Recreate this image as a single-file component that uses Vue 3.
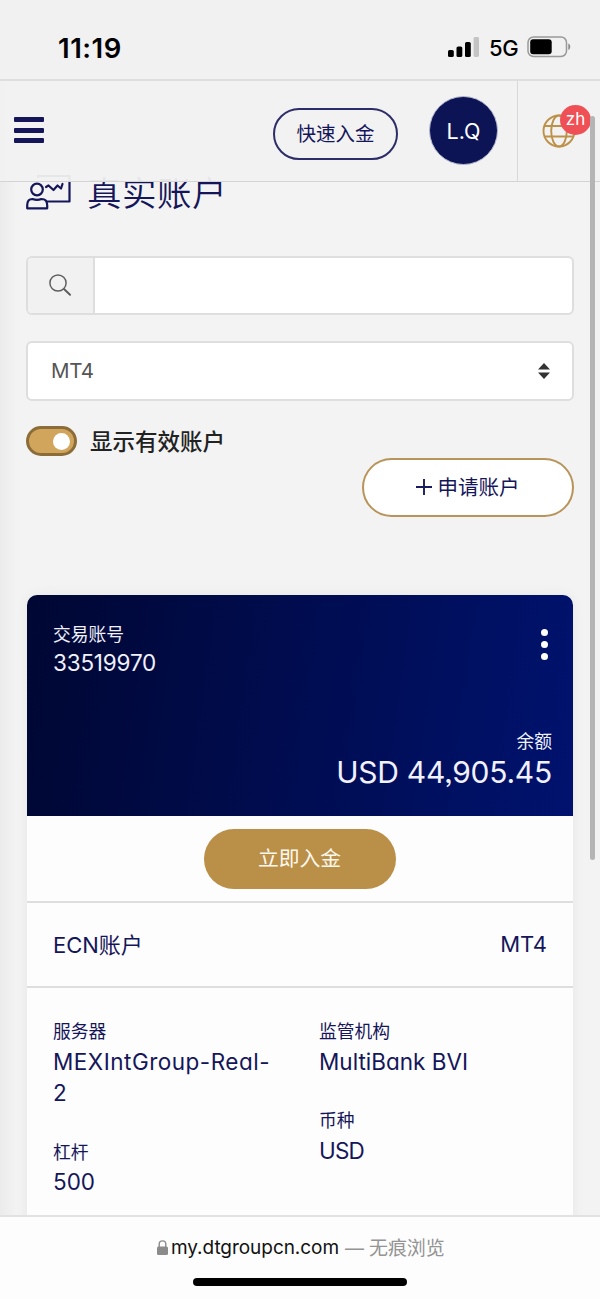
<script setup>
const signal = [
  { x: 0, y: 13, h: 7 },
  { x: 8.5, y: 9.5, h: 10.5 },
  { x: 17, y: 5, h: 15 }
]
const columns = [
  [
    { label: '服务器', value: 'MEXIntGroup-Real-\u200b2', cls: 'server' },
    { label: '杠杆', value: '500', cls: 'num' }
  ],
  [
    { label: '监管机构', value: 'MultiBank BVI', cls: 'bank' },
    { label: '币种', value: 'USD', cls: 'cur' }
  ]
]
</script>

<template>
  <div class="screen">
    <div class="status">
      <span class="time">11:19</span>
      <div class="status-right">
        <svg class="signal" width="32" height="20" viewBox="0 0 32 20">
          <rect v-for="b in signal" :key="b.x" :x="b.x" :y="b.y" width="5.8" :height="b.h" rx="1.6" />
          <rect x="25.6" y="0" width="5.4" height="20" rx="1.4" fill="#c4c4c4" />
        </svg>
        <span class="net">5G</span>
        <svg width="44" height="22" viewBox="0 0 44 22">
          <rect x="1" y="1" width="38.5" height="19.5" rx="5.5" fill="none" stroke="#999" stroke-width="1.5" />
          <rect x="3.2" y="3.2" width="21.5" height="15" rx="3" />
          <path d="M41.3 7.5c2.6 1 2.6 5.500 0 6.500z" fill="#888" />
        </svg>
      </div>
    </div>

    <header class="header">
      <div class="burger"><i></i><i></i><i></i></div>
      <button class="quick"><span>快速入金</span></button>
      <div class="avatar"><span>L.Q</span></div>
      <div class="lang">
        <svg width="34" height="34" viewBox="0 0 34 34" fill="none" stroke="#bd9148" stroke-width="1.9">
          <circle cx="17" cy="17" r="15.500" />
          <ellipse cx="17" cy="17" rx="7.800" ry="15.500" />
          <path d="M3 12h28M3 22.500h28" />
        </svg>
        <span class="badge">zh</span>
      </div>
    </header>

    <main class="main">
      <h1 class="title">
        <svg width="46" height="36" viewBox="0 0 46 36" fill="none" stroke="#15165a" stroke-width="2.200" stroke-linejoin="round" stroke-linecap="round">
          <path d="M12 3V2H43.500V27.500H21" />
          <circle cx="11" cy="15.500" r="5.800" />
          <path d="M1.200 34.300V31.300C1.200 27 3.500 25 6.500 25C9.500 26.200 12.500 26.200 15.500 25C19 25 21.200 27 21.200 31.300V34.300Z" />
          <path d="M20 13L22.500 11.500L27.500 16L31.500 11.500L35 14.500L36.500 10" />
        </svg>
        <span>真实账户</span>
      </h1>

      <div class="search">
        <div class="search-icon">
          <svg width="22" height="22" viewBox="0 0 22 22" fill="none" stroke="#5f5f5f" stroke-width="1.500" stroke-linecap="round">
            <circle cx="9" cy="9" r="8.100" />
            <path d="M15 15L21 20.800" stroke-width="2" />
          </svg>
        </div>
        <div class="search-input"></div>
      </div>

      <div class="select">
        <span>MT4</span>
        <svg width="12" height="16" viewBox="0 0 12 16" fill="#333"><path d="M0 6.600L6 0L12 6.600ZM0 9.400L6 16L12 9.400Z" /></svg>
      </div>

      <div class="toggle-row">
        <div class="toggle"><i></i></div>
        <span>显示有效账户</span>
      </div>

      <button class="apply">
        <svg width="16" height="16" viewBox="0 0 16 16" stroke="#1a1b5e" stroke-width="1.900"><path d="M0 8H16M8 0V16" /></svg>
        <span>申请账户</span>
      </button>

      <section class="card">
        <div class="hero">
          <div class="hero-top">
            <div>
              <div class="label">交易账号</div>
              <div class="account">33519970</div>
            </div>
            <div class="dots"><i></i><i></i><i></i></div>
          </div>
          <div class="balance">
            <div class="label">余额</div>
            <div class="amount">USD 44,905.45</div>
          </div>
        </div>
        <div class="fund"><button>立即入金</button></div>
        <div class="type">
          <span>ECN账户</span>
          <span class="mt">MT4</span>
        </div>
        <div class="details">
          <div v-for="(col, i) in columns" :key="i" class="col">
            <div v-for="d in col" :key="d.label" class="field">
              <div class="label">{{ d.label }}</div>
              <div class="value" :class="d.cls">{{ d.value }}</div>
            </div>
          </div>
        </div>
      </section>
    </main>

    <footer class="footer">
      <div class="url">
        <svg width="11" height="15" viewBox="0 0 11 15"><path d="M2.200 7V4C2.200 -0.200 8.800 -0.200 8.800 4V7" fill="none" stroke="#8b8b8b" stroke-width="1.400" /><rect y="6.400" width="11" height="8.600" rx="1.500" fill="#8b8b8b" /></svg>
        <span class="domain">my.dtgroupcn.com</span>
        <span class="private">— 无痕浏览</span>
      </div>
      <div class="home"></div>
    </footer>
    <div class="scrollbar"></div>
  </div>
</template>

<style>
body { background: #f2f2f2; }
</style>

<style scoped>
* { box-sizing: border-box; }
.screen {
  position: relative; width: 600px; height: 1299px; overflow: hidden;
  display: flex; flex-direction: column;
  background: linear-gradient(90deg, #ebebeb 0, #f3f3f3 16px, #f3f3f3 100%);
  color: #15165a;
  font-family: Inter, "Noto Sans CJK SC", sans-serif;
  font-feature-settings: "cv11", "ss03";
}
button { font: inherit; color: inherit; padding: 0; margin: 0; }
.status {
  flex: none; height: 81px; background: #f1f1f1; border-bottom: 2px solid #dedede;
  display: flex; justify-content: space-between; padding: 36px 29px 0 58px; color: #000;
}
.time { font-size: 27.500px; line-height: 24px; font-weight: 600; letter-spacing: 0.5px; }
.status-right { display: flex; height: 22px; align-items: center; }
.signal { margin-right: 9px; }
.net { font-size: 22px; line-height: 24px; font-weight: 500; width: 30px; margin-right: 8px; padding-top: 2px; letter-spacing: -0.3px; }
.header {
  flex: none; position: relative; z-index: 1; height: 101px; display: flex; align-items: center;
  background: rgba(241, 241, 241, 0.95); border-bottom: 1px solid #d4d4d4; padding-left: 14px;
}
.burger { width: 30px; display: grid; gap: 5.500px; margin: -2px 229px 0 0; }
.burger i { height: 5px; border-radius: 1px; background: #15165a; }
.quick {
  width: 125px; height: 52px; border: 2px solid #2d2d68; border-radius: 26px; background: none;
  font-size: 19.500px; line-height: 48px; margin: 6px 32px 0 0;
}
.avatar {
  width: 69px; height: 69px; border-radius: 50%; background: #0c1455; border: 1px solid #b8bbd0;
  color: #fff; font-size: 21.500px; line-height: 68px; text-align: center; margin: -1px 0 0 -1px;
}
.lang {
  position: relative; align-self: stretch; margin-left: 19px; border-left: 1px solid #d8d8d8; flex: 1;
  padding: 33px 0 0 24px;
}
.badge {
  position: absolute; left: 42px; top: 24px; width: 31px; height: 30px; border-radius: 50%;
  background: #ee5055; color: #fff; font-size: 17px; line-height: 28px; text-align: center;
}
.main { flex: 1; min-height: 0; padding: 0 26px; margin-top: -8px; margin-bottom: -1px; }
.title { display: flex; margin: 0; height: 82px; font-size: 34.500px; font-weight: 350; line-height: 40px; letter-spacing: 0.5px; }
.title svg { margin-right: 15px; }
.search { height: 59px; display: flex; border: 2px solid #dedede; border-radius: 6px; background: #fff; overflow: hidden; }
.search-icon { width: 67px; border-right: 2px solid #dedede; background: #f1f1f1; display: grid; place-items: center; padding: 0 1px 2px 0; }
.select {
  margin-top: 26px; height: 60px; border: 2px solid #dedede; border-radius: 6px; background: #fff;
  display: flex; align-items: center; justify-content: space-between; padding: 0 22px 0 23px;
  color: #555; font-size: 20.500px;
}
.select span { margin-top: -2px; letter-spacing: -0.3px; }
.toggle-row { display: flex; margin-top: 23px; height: 34px; align-items: center; color: #222; font-size: 22.500px; font-weight: 500; }
.toggle {
  width: 51px; height: 30px; margin-right: 13px; border-radius: 15px; border: 3px solid #8c6c38; background: #d2a55c;
  display: flex; justify-content: flex-end; align-items: center; padding-right: 4px;
}
.toggle-row span { margin-top: -2px; }
.toggle i { width: 17px; height: 17px; border-radius: 50%; background: #fff; }
.apply {
  display: flex; align-items: center; justify-content: center; gap: 6px; margin: 0 0 78px auto; width: 212px; height: 59px;
  border: 2px solid #b8935a; border-radius: 30px; background: #fff; font-size: 20.500px; padding: 0 1px 2px 0;
}
.apply span { margin-top: -1px; }
.card { margin: 0 1px; background: #fdfdfd; border-radius: 10px 10px 0 0; box-shadow: 0 0 14px rgba(0, 0, 0, 0.05); height: 640px; }
.hero {
  height: 221px; border-radius: 10px 10px 0 0; background: linear-gradient(98deg, #000733, #00126e);
  color: #f1f1ff; padding: 25px 21px 0 26px;
}
.hero-top { display: flex; justify-content: space-between; height: 108px; }
.label { font-size: 17.800px; line-height: 28px; }
.hero-top .label { padding-top: 1px; height: 29px; }
.account { font-size: 22.500px; line-height: 28px; letter-spacing: -0.2px; }
.dots { display: grid; gap: 5px; align-content: start; margin: 9px 4px 0 0; }
.dots i { width: 7px; height: 7px; border-radius: 50%; background: #fff; }
.balance { text-align: right; }
.amount { font-size: 30px; line-height: 32px; letter-spacing: -0.25px; }
.fund { height: 87px; border-bottom: 2px solid #dedede; display: grid; place-items: center; }
.fund button { width: 192px; height: 60px; border: 0; border-radius: 30px; background: #ba9048; color: #fff8ee; font-size: 20.800px; padding: 0 1px 3px 0; }
.type { height: 85px; border-bottom: 2px solid #dedede; display: flex; justify-content: space-between; align-items: center; padding: 0 26px 3px; font-size: 22px; }
.mt { padding-top: 1px; }
.details { display: grid; grid-template-columns: 266px 1fr; padding: 30px 0 0 26px; }
.field { margin-bottom: 30px; }
.value { font-size: 22.500px; line-height: 31.500px; width: 226px; margin-top: -0.500px; }
.server { letter-spacing: 0.5px; }
.cur { letter-spacing: -0.8px; }
.footer { flex: none; position: relative; z-index: 2; height: 84px; background: #fdfdfd; border-top: 2px solid #e2e2e2; }
.url { display: flex; align-items: center; height: 24px; margin: 18px 0 0 157px; color: #111; font-size: 19px; }
.url span { margin-top: -2px; }
.url .domain { margin: 0 6px 0 3px; letter-spacing: -0.05px; }
.private { color: #949494; letter-spacing: -0.15px; }
.home { width: 214px; height: 8px; border-radius: 4px; background: #000; margin: 19px auto 0; }
.scrollbar { position: absolute; z-index: 3; left: 590px; top: 116px; width: 5px; height: 744px; border-radius: 3px; background: #b5b5b5; }
</style>
